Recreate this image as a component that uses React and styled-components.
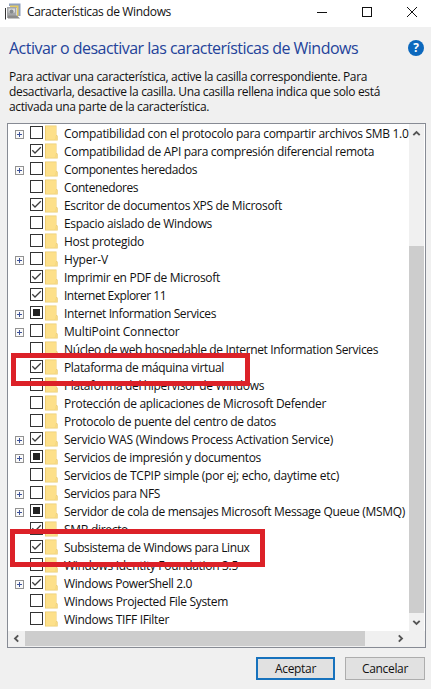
import React, { useLayoutEffect, useRef, useState } from "react";
import styled, { createGlobalStyle, css } from "styled-components";

const GlobalStyle = createGlobalStyle`
  * { box-sizing: border-box; }
  body {
    margin: 0;
    overflow: hidden;
    background: #fff;
    font-family: "Open Sans", "Noto Sans", sans-serif;
    font-size: 12px;
    color: #111;
  }
`;

const Dialog = styled.div`
  width: 431px;
  height: 690px;
  display: flex;
  flex-direction: column;
  background: #fff;
`;

const TitleBar = styled.header`
  height: 27px;
  flex: none;
  display: flex;
  align-items: center;
  padding: 0 14px 4px 5px;
`;

const TitleText = styled.div`
  flex: 1;
  margin-left: 6px;
  line-height: 16px;
`;

const WindowControls = styled.div`
  display: flex;
  gap: 35px;
  svg { display: block; }
`;

const Body = styled.main`
  height: 662px;
  display: flex;
  flex-direction: column;
  padding: 11px 5px 0 7px;
  background: #f0f0f0;
`;

const HeadingRow = styled.div`
  display: flex;
  justify-content: space-between;
  align-items: center;
  height: 20px;
  padding: 0 2px;
`;

const Heading = styled.h1`
  margin: 0;
  font-size: 16px;
  line-height: 20px;
  font-weight: 400;
  color: #24439a;
`;

const HelpBadge = styled.div`
  width: 16px;
  height: 16px;
  margin-top: -1px;
  border-radius: 50%;
  background: #0c68bd;
  color: #fff;
  font-weight: 700;
  font-size: 12px;
  line-height: 16px;
  text-align: center;
`;

const Intro = styled.div`
  padding: 11px 0 0 2px;
  line-height: 15px;
  height: 65px;
`;

const ListBox = styled.section`
  position: relative;
  width: 419px;
  height: 525px;
  flex: none;
  border: 1px solid #878b94;
  background: #fff;
  display: grid;
  grid-template-columns: 401px 16px;
  grid-template-rows: 507px 16px;
`;

const Tree = styled.ul`
  margin: 0;
  padding: 0;
  list-style: none;
  overflow: hidden;
`;

const Row = styled.li`
  display: grid;
  grid-template-columns: 15px 15px 19px max-content;
  align-items: start;
  height: 18px;
  padding-left: 7px;
`;

const RowLabel = styled.div`
  padding-top: 1px;
  line-height: 18px;
`;

const Expander = styled.svg`
  display: block;
  margin-top: 6px;
`;

const Check = styled.svg`
  display: block;
  margin-top: 2px;
`;

const Folder = styled.svg`
  display: block;
  margin-top: 1px;
`;

const Line = styled.span`
  display: inline-block;
  white-space: pre;
`;

const ScrollTrack = styled.div`
  display: flex;
  background: #f0f0f0;
  ${(p) =>
    p.$vertical
      ? css`flex-direction: column; height: 507px; width: 15px;`
      : css`width: 417px;`}
`;

const ScrollArrow = styled.div`
  flex: none;
  width: ${(p) => p.$w}px;
  height: ${(p) => p.$h}px;
  display: grid;
  place-items: center;
  svg { display: block; }
`;

const ScrollThumb = styled.div`
  flex: none;
  background: #cdcdcd;
  width: ${(p) => p.$w}px;
  height: ${(p) => p.$h}px;
  margin: ${(p) => p.$margin || "0"};
`;

const Highlight = styled.div`
  position: absolute;
  left: ${(p) => p.$x}px;
  top: ${(p) => p.$y}px;
  width: ${(p) => p.$w}px;
  height: ${(p) => p.$h}px;
  border: 5px solid #dc2128;
`;

const Footer = styled.footer`
  display: flex;
  justify-content: flex-end;
  gap: 10px;
  padding: 9px 1px 0 0;
`;

const Button = styled.button`
  width: ${(p) => (p.$primary ? 79 : 80)}px;
  height: 23px;
  padding: 1px 0 0;
  border: ${(p) => (p.$primary ? "2px solid #1772bd" : "1px solid #adadad")};
  background: #e1e1e1;
  color: inherit;
  font: inherit;
  line-height: 18px;
`;

// Spreads its letters so that the line takes the given width.
function FitLine({ width, children }) {
  const ref = useRef(null);
  const [spacing, setSpacing] = useState(0);
  useLayoutEffect(() => {
    const natural = ref.current.getBoundingClientRect().width;
    setSpacing((width - natural) / children.length);
  }, []);
  return (
    <Line ref={ref} style={{ letterSpacing: spacing }}>
      {children}
    </Line>
  );
}

function CheckBox({ state }) {
  return (
    <Check width="13" height="13" viewBox="0 0 13 13">
      <rect x="0.5" y="0.5" width="12" height="12" fill="#fff" stroke="#333" />
      {state === "on" && (
        <path d="M2.3 6.3 5 9 10.8 3.2" fill="none" stroke="#3c3c3c" strokeWidth="1.25" />
      )}
      {state === "partial" && <rect x="3" y="3" width="7" height="7" fill="#222" />}
    </Check>
  );
}

function FolderIcon() {
  return (
    <Folder width="13" height="16" viewBox="0 0 13 16">
      <path d="M0 .5h11.5V10l1.2.8V15.5H0z" fill="#eccb70" />
      <path d="M1 1.2H11v9.3L9.7 14.8H1z" fill="#fde08a" />
      <path d="M10.2 11h1.6v4h-1.6z" fill="#f9dd88" />
    </Folder>
  );
}

function ExpandIcon() {
  return (
    <Expander width="9" height="9" viewBox="0 0 9 9">
      <rect x=".5" y=".5" width="8" height="8" fill="#fafafa" stroke="#929292" />
      <path d="M2 4.5h5M4.5 2v5" stroke="#3d5299" />
    </Expander>
  );
}

function Chevron({ rotate = 0 }) {
  return (
    <svg width="9" height="9" viewBox="0 0 9 9">
      <path d="M1.3 6.2 4.5 3l3.2 3.2" transform={`rotate(${rotate} 4.5 4.5)`} fill="none" stroke="#555" strokeWidth="1.9" />
    </svg>
  );
}

function AppIcon() {
  return (
    <svg width="16" height="17" viewBox="0 0 16 17">
      <path d="M4 .5h11.5V13H13V3H4z" fill="#8fa0bd" />
      <path d="M5 2.5h8.5V13H12V5H5z" fill="#e5cb62" />
      <path d="M2 4h9.5v11H2z" fill="#a4a6a8" />
      <path d="M3.5 5.5h6.5v4H3.5z" fill="#d8dadb" />
      <circle cx="6.5" cy="8.5" r="2" fill="#85898c" />
      <path d="M3 12.5h9l3 3H3z" fill="#8b8b8b" />
      <path d="M.5 5v11.5" fill="none" stroke="#333" />
    </svg>
  );
}

const features = [
  ["Compatibilidad con el protocolo para compartir archivos SMB 1.0", 344.5, "off", true],
  ["Compatibilidad de API para compresión diferencial remota", 310, "on"],
  ["Componentes heredados", 133, "off", true],
  ["Contenedores", 74, "off"],
  ["Escritor de documentos XPS de Microsoft", 218, "on"],
  ["Espacio aislado de Windows", 148, "off"],
  ["Host protegido", 80, "off"],
  ["Hyper-V", 44, "off", true],
  ["Imprimir en PDF de Microsoft", 156, "on"],
  ["Internet Explorer 11", 102, "on"],
  ["Internet Information Services", 152, "partial", true],
  ["MultiPoint Connector", 115.5, "off", true],
  ["Núcleo de web hospedable de Internet Information Services", 314, "off"],
  ["Plataforma de máquina virtual", 160, "on"],
  ["Plataforma del hipervisor de Windows", 200, "off"],
  ["Protección de aplicaciones de Microsoft Defender", 262, "off"],
  ["Protocolo de puente del centro de datos", 212, "off"],
  ["Servicio WAS (Windows Process Activation Service)", 269, "on", true],
  ["Servicios de impresión y documentos", 197, "partial", true],
  ["Servicios de TCPIP simple (por ej; echo, daytime etc)", 275, "off"],
  ["Servicios para NFS", 96, "off", true],
  ["Servidor de cola de mensajes Microsoft Message Queue (MSMQ)", 341, "partial", true],
  ["SMB directo", 64, "on"],
  ["Subsistema de Windows para Linux", 185.5, "on"],
  ["Windows Identity Foundation 3.5", 174, "off"],
  ["Windows PowerShell 2.0", 128, "on", true],
  ["Windows Projected File System", 164, "off"],
  ["Windows TIFF IFilter", 105, "off"],
];

export default function App() {
  return (
    <>
      <GlobalStyle />
      <Dialog>
        <TitleBar>
          <AppIcon />
          <TitleText>
            <FitLine width={144}>Características de Windows</FitLine>
          </TitleText>
          <WindowControls>
            <svg width="10" height="10"><path d="M0 5.5h10" stroke="#111" /></svg>
            <svg width="10" height="10"><rect x=".5" y=".5" width="9" height="9" fill="none" stroke="#111" /></svg>
            <svg width="10" height="10"><path d="M0 0l10 10M10 0L0 10" stroke="#111" /></svg>
          </WindowControls>
        </TitleBar>
        <Body>
          <HeadingRow>
            <Heading>
              <FitLine width={349}>Activar o desactivar las características de Windows</FitLine>
            </Heading>
            <HelpBadge>?</HelpBadge>
          </HeadingRow>
          <Intro>
            <FitLine width={358}>Para activar una característica, active la casilla correspondiente. Para</FitLine>
            <br />
            <FitLine width={371}>desactivarla, desactive la casilla. Una casilla rellena indica que solo está</FitLine>
            <br />
            <FitLine width={200}>activada una parte de la característica.</FitLine>
          </Intro>
          <ListBox>
            <Tree>
              {features.map(([label, width, state, expandable]) => (
                <Row key={label}>
                  <div>{expandable && <ExpandIcon />}</div>
                  <CheckBox state={state} />
                  <FolderIcon />
                  <RowLabel>
                    <FitLine width={width}>{label}</FitLine>
                  </RowLabel>
                </Row>
              ))}
            </Tree>
            <ScrollTrack $vertical>
              <ScrollArrow $w={15} $h={18}><Chevron /></ScrollArrow>
              <ScrollThumb $w={15} $h={367} $margin="104px 0 0" />
              <ScrollArrow $w={15} $h={18}><Chevron rotate={180} /></ScrollArrow>
            </ScrollTrack>
            <ScrollTrack>
              <ScrollArrow $w={17} $h={15}><Chevron rotate={-90} /></ScrollArrow>
              <ScrollThumb $w={340} $h={15} $margin="0 27px 0 0" />
              <ScrollArrow $w={16} $h={15}><Chevron rotate={90} /></ScrollArrow>
            </ScrollTrack>
            <Highlight $x={3} $y={229} $w={239} $h={33} />
            <Highlight $x={2} $y={405} $w={255} $h={38} />
          </ListBox>
          <Footer>
            <Button $primary><FitLine width={41}>Aceptar</FitLine></Button>
            <Button><FitLine width={46}>Cancelar</FitLine></Button>
          </Footer>
        </Body>
      </Dialog>
    </>
  );
}
